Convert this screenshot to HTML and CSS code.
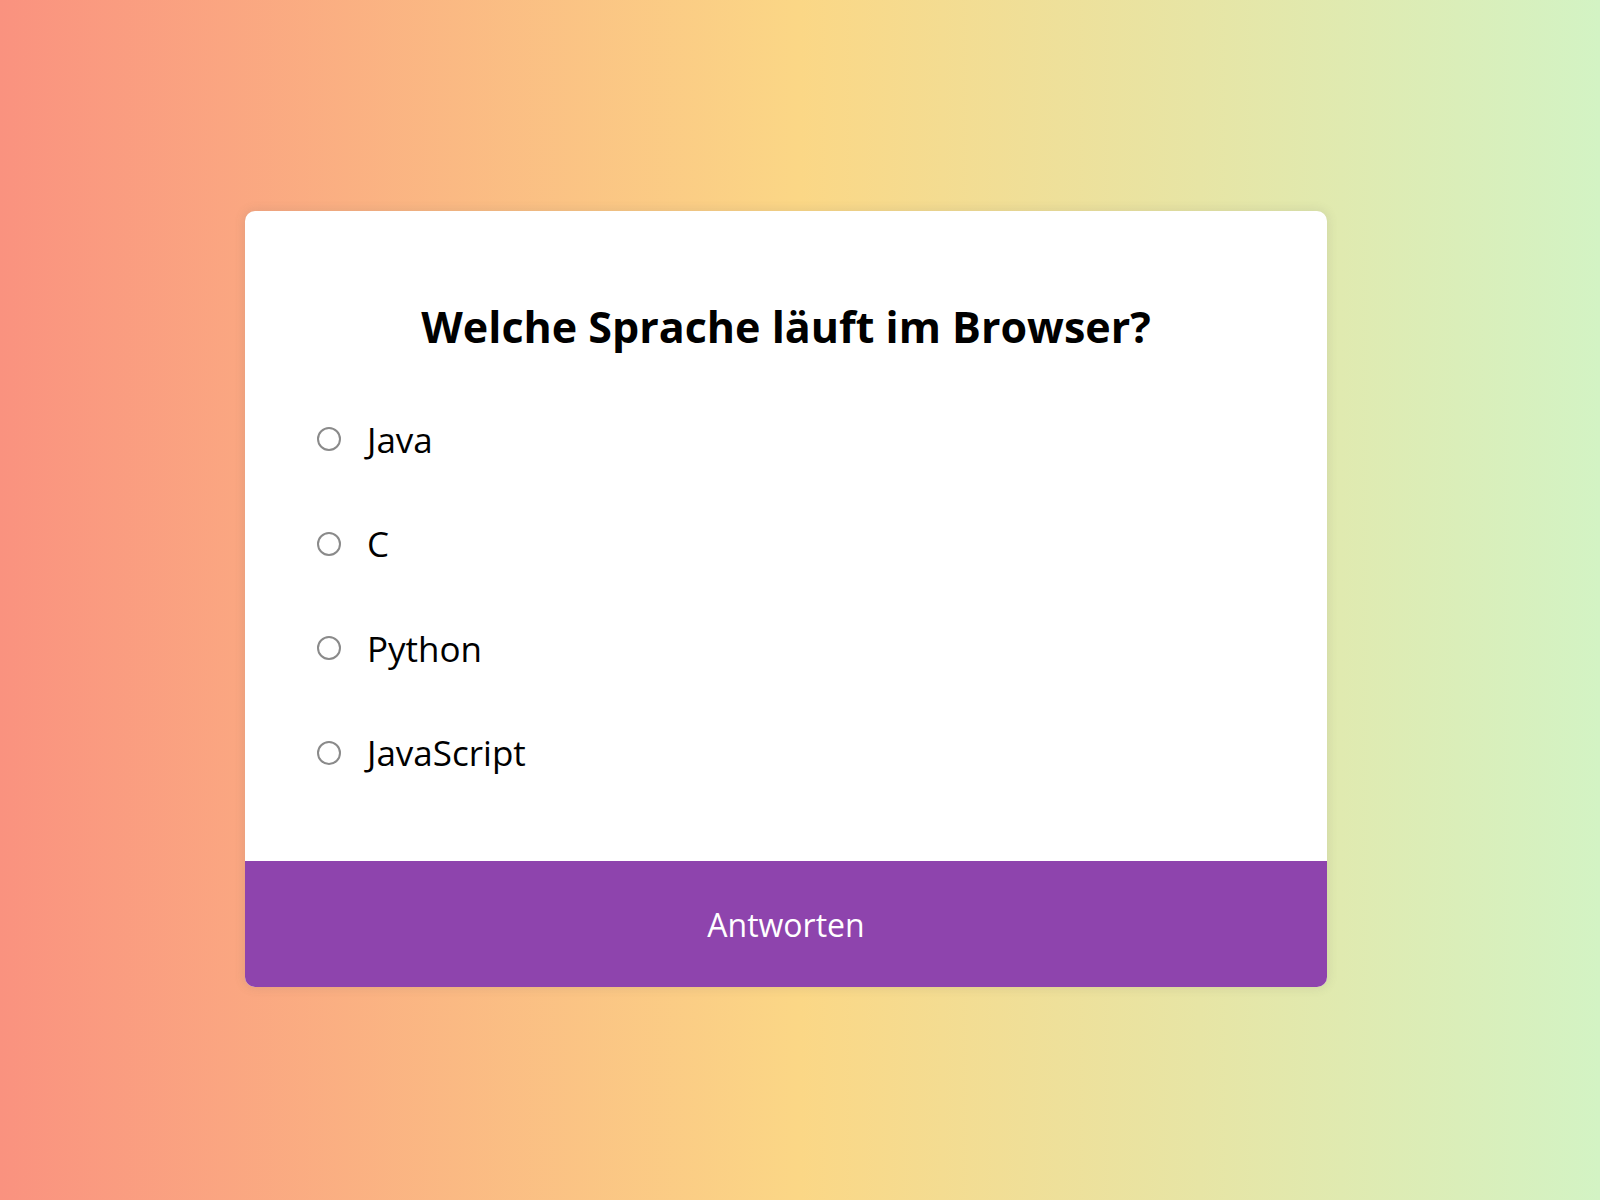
FILE: index.html
```html
<!DOCTYPE html>
<html lang="de">
<head>
<meta charset="utf-8">
<title>Quiz</title>
<link rel="stylesheet" href="styles.css">
</head>
<body>
<div class="page">
  <div class="card">
    <div class="quiz">
      <h2 class="question">Welche Sprache läuft im Browser?</h2>
      <ul class="answers">
        <li class="answer"><label><input type="radio" name="a" class="radio"><span>Java</span></label></li>
        <li class="answer"><label><input type="radio" name="a" class="radio"><span>C</span></label></li>
        <li class="answer"><label><input type="radio" name="a" class="radio"><span>Python</span></label></li>
        <li class="answer"><label><input type="radio" name="a" class="radio"><span>JavaScript</span></label></li>
      </ul>
    </div>
    <button class="submit">Antworten</button>
  </div>
</div>
</body>
</html>
```
FILE: styles.css
```css
* { box-sizing: border-box; }
html, body { margin: 0; padding: 0; }
body {
  font-family: "Open Sans", "Noto Sans", sans-serif;
  background: linear-gradient(to right, #fa927f 0%, #fbd786 50%, #d3f3c4 100%);
  min-height: 100vh;
}
.page {
  min-height: 1200px;
  padding: 211px 0 0 245px;
}
.card {
  width: 1082px;
  background: #fff;
  border-radius: 10px;
  overflow: hidden;
  box-shadow: 0 0 10px 2px rgba(100, 100, 100, 0.12);
}
.quiz {
  padding: 90px 72px 56px;
}
.question {
  margin: 0 0 34px;
  text-align: center;
  font-size: 43px;
  line-height: 52px;
  font-weight: 700;
  color: #000;
}
.answers {
  list-style: none;
  margin: 0;
  padding: 0;
}
.answer {
  height: 104.5px;
  display: flex;
  align-items: center;
}
.answer label {
  display: flex;
  align-items: center;
  gap: 26px;
  font-size: 35px;
  color: #000;
  cursor: pointer;
}
.radio {
  appearance: none;
  -webkit-appearance: none;
  margin: 0;
  width: 24px;
  height: 24px;
  border: 2px solid #8a8a8a;
  border-radius: 50%;
  background: #fff;
}
.submit {
  display: block;
  width: 100%;
  height: 126px;
  border: 0;
  background: #8e44ad;
  color: #fff;
  font-family: "Open Sans", "Noto Sans", sans-serif;
  font-size: 32px;
  cursor: pointer;
}
```
